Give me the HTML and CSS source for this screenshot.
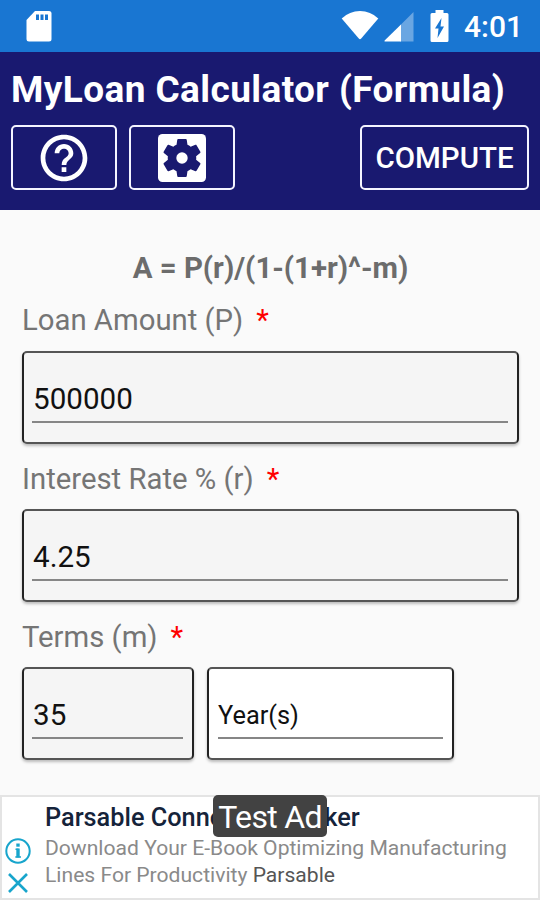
FILE: index.html
```html
<!DOCTYPE html>
<html lang="en">
<head>
  <meta charset="UTF-8">
  <title>MyLoan Calculator</title>
  <link rel="stylesheet" href="styles.css">
</head>
<body>

<!-- Status bar -->
<div class="status-bar">
  <svg class="sd-icon" width="26" height="31" viewBox="0 0 26 31">
    <path fill="#fff" d="M9 0H23a2.500 2.500 0 0 1 2.500 2.500V28a2.500 2.500 0 0 1-2.500 2.500H3A2.500 2.500 0 0 1 .5 28V9z"/>
    <path fill="#1976d2" d="M10 3.500h3v5.500h-3zM14.500 3.500h3v5.500h-3zM19 3.500h3v5.500h-3z"/>
  </svg>
  <div class="status-right">
    <svg class="wifi-icon" width="38" height="30" viewBox="0 0 38 30">
      <path fill="#fff" d="M.7 7.500Q8.500 0 19 0t18.300 7.500L20.200 27.600q-1.200 1.400-2.400 0z"/>
    </svg>
    <svg class="signal-icon" width="30" height="30" viewBox="0 0 30 30">
      <path fill="#6aa6e2" d="M29.500 0V29.500H16V13.500z"/>
      <path fill="#fff" d="M17 12.500V29.500H1Q0 29.500 .6 28.500z"/>
    </svg>
    <svg class="battery-icon" width="19" height="32" viewBox="0 0 19 32">
      <path fill="#fff" d="M5.500 0h8v3H17a1.500 1.500 0 0 1 1.500 1.500V30.500a1.500 1.500 0 0 1-1.500 1.500H2A1.500 1.500 0 0 1 .5 30.500V4.500A1.500 1.500 0 0 1 2 3h3.500z"/>
      <path fill="#1976d2" d="M11.500 8L5 18.500h3.500L7.500 28 14 16.500h-3.500z"/>
    </svg>
    <span class="clock">4:01</span>
  </div>
</div>

<!-- Header -->
<div class="header">
  <div class="app-title">MyLoan Calculator (Formula)</div>
  <div class="toolbar">
    <button class="btn icon-btn">
      <svg width="56" height="56" viewBox="0 0 24 24">
        <path fill="#fff" d="M11 18h2v-2h-2v2zm1-16C6.480 2 2 6.480 2 12s4.480 10 10 10 10-4.480 10-10S17.520 2 12 2zm0 18c-4.410 0-8-3.590-8-8s3.590-8 8-8 8 3.590 8 8-3.590 8-8 8zm0-14c-2.210 0-4 1.790-4 4h2c0-1.100.9-2 2-2s2 .9 2 2c0 2-3 1.750-3 5h2c0-2.250 3-2.500 3-5 0-2.210-1.790-4-4-4z"/>
      </svg>
    </button>
    <button class="btn icon-btn">
      <svg width="48" height="48" viewBox="0 0 48 48">
        <rect width="48" height="48" rx="4.500" fill="#fff"/>
        <path fill="#191970" transform="translate(1.200 1.200) scale(1.900)" d="M19.430 12.980c.04-.32.07-.64.07-.98s-.03-.66-.07-.98l2.110-1.650c.19-.15.24-.42.12-.64l-2-3.460c-.12-.22-.39-.3-.61-.22l-2.490 1c-.52-.4-1.080-.73-1.690-.98l-.38-2.650C14.460 2.180 14.250 2 14 2h-4c-.25 0-.46.18-.49.42l-.38 2.650c-.61.25-1.170.59-1.690.98l-2.490-1c-.23-.09-.49 0-.61.22l-2 3.460c-.13.22-.07.49.12.64l2.110 1.650c-.04.32-.07.65-.07.98s.03.66.07.98l-2.110 1.650c-.19.15-.24.42-.12.64l2 3.460c.12.22.39.3.61.22l2.490-1c.52.4 1.080.73 1.690.98l.38 2.650c.03.24.24.42.49.42h4c.25 0 .46-.18.49-.42l.38-2.650c.61-.25 1.170-.59 1.690-.98l2.490 1c.23.09.49 0 .61-.22l2-3.460c.12-.22.07-.49-.12-.64z"/>
        <circle cx="24" cy="24" r="5.700" fill="#fff"/>
      </svg>
    </button>
    <button class="btn compute-btn"><span>COMPUTE</span></button>
  </div>
</div>

<!-- Loan form -->
<div class="form">
  <div class="formula"><span>A = P(r)/(1-(1+r)^-m)</span></div>

  <div class="label"><span class="label-text">Loan Amount (P)</span><span class="required">*</span></div>
  <div class="field"><div class="value">500000</div></div>

  <div class="label"><span class="label-text">Interest Rate % (r)</span><span class="required">*</span></div>
  <div class="field"><div class="value">4.25</div></div>

  <div class="label"><span class="label-text">Terms (m)</span><span class="required">*</span></div>
  <div class="field-row">
    <div class="field term"><div class="value">35</div></div>
    <div class="field unit"><div class="value small">Year(s)</div></div>
  </div>
</div>

<!-- Ad banner -->
<div class="ad">
  <div class="ad-icons">
    <svg width="26" height="26" viewBox="0 0 26 26" fill="none" stroke="#18a5cc">
      <circle cx="13" cy="13" r="11.700" stroke-width="2"/>
      <path stroke-width="3.400" d="M13 5.500v3.200"/>
      <path stroke-width="3.400" d="M13 10.500v9"/>
      <path stroke-width="1.600" d="M10.500 11.300h3M10.300 19h5.700"/>
    </svg>
    <svg width="20" height="20" viewBox="0 0 20 20" fill="none" stroke="#18a5cc" stroke-width="2.600">
      <path d="M1 1l18 18M19 1L1 19"/>
    </svg>
  </div>
  <div class="ad-text">
    <div class="ad-title">Parsable Connected Worker</div>
    <div class="ad-line">Download Your E-Book Optimizing Manufacturing</div>
    <div class="ad-line">Lines For Productivity <span class="ad-brand">Parsable</span></div>
  </div>
  <div class="test-badge">Test Ad</div>
</div>

</body>
</html>
```

FILE: styles.css
```css
* {
  box-sizing: border-box;
}

body {
  margin: 0;
  height: 900px;
  display: flex;
  flex-direction: column;
  overflow: hidden;
  background: #fafafa;
  font-family: Roboto, sans-serif;
  white-space: nowrap;
}

svg {
  display: block;
  flex: none;
}

.status-bar {
  height: 52px;
  flex: none;
  display: flex;
  justify-content: space-between;
  padding: 11px 18px 0 26px;
  background: #1976d2;
}

.status-right {
  display: flex;
  width: 181px;
}

.signal-icon {
  margin: 1px 0 0 5px;
}

.battery-icon {
  margin: -1px 0 0 16px;
}

.clock {
  margin-left: 15px;
  color: #fff;
  font-size: 30px;
  font-weight: 500;
  line-height: 32px;
}

.header {
  height: 158px;
  flex: none;
  padding: 16px 11px 0;
  background: #191970;
}

.app-title {
  height: 43px;
  color: #fff;
  font-size: 37px;
  font-weight: bold;
  letter-spacing: 0.4px;
  line-height: 44px;
}

.toolbar {
  display: flex;
  gap: 12px;
  margin-top: 14px;
}

.btn {
  height: 65px;
  display: flex;
  align-items: center;
  justify-content: center;
  padding: 0;
  border: 2.5px solid #f4f4ff;
  border-radius: 5px;
  background: none;
  color: #fff;
  font-family: inherit;
}

.icon-btn {
  width: 106px;
}

.compute-btn {
  width: 169px;
  margin-left: auto;
  font-size: 29.500px;
  font-weight: 500;
}

.form {
  flex: 1;
  padding: 40px 21px 0 22px;
}

.formula {
  height: 36px;
  color: #6c6c6c;
  font-size: 29.400px;
  font-weight: bold;
  line-height: 36px;
  text-align: center;
}

.label {
  display: flex;
  gap: 13px;
  height: 36px;
  margin: 17px 0 12px;
  color: #757575;
  font-size: 29.300px;
  line-height: 36px;
}

.formula + .label {
  margin: 16px 0 13px;
}

.required {
  color: #f00;
}

.field {
  height: 93px;
  padding: 25px 9px 0 8px;
  border: 2px solid #222;
  border-top-color: #555;
  border-bottom-color: #555;
  border-radius: 5px;
  background: #f5f5f5;
  box-shadow: 0 2px 3px rgba(0, 0, 0, 0.25);
}

.value {
  height: 45px;
  padding: 0 1px;
  border-bottom: 2px solid #868686;
  color: #111;
  font-size: 29.600px;
  line-height: 42px;
}

.small {
  padding: 0;
  font-size: 25.400px;
}

.field-row {
  display: flex;
  gap: 13px;
}

.term {
  width: 172px;
}

.unit {
  width: 247px;
  padding-left: 9px;
  background: #fff;
}

.ad {
  position: relative;
  height: 105px;
  flex: none;
  display: flex;
  border: 2px solid #e4e4e4;
  background: #fff;
}

.ad-icons {
  width: 43px;
  display: flex;
  flex-direction: column;
  align-items: center;
  gap: 9px;
  padding: 41px 11px 0 0;
}

.ad-title {
  height: 34px;
  margin-top: 4px;
  color: #15233a;
  font-size: 25.300px;
  font-weight: 500;
  line-height: 34px;
}

.ad-line {
  height: 27px;
  color: #8a8a8a;
  font-size: 21.100px;
  line-height: 25px;
}

.ad-brand {
  color: #555;
}

.test-badge {
  position: absolute;
  top: -2px;
  left: 211px;
  width: 114px;
  height: 42px;
  border-radius: 5px;
  background: #424242;
  color: #fff;
  font-size: 32px;
  letter-spacing: -0.7px;
  line-height: 45px;
  text-align: center;
}
```
